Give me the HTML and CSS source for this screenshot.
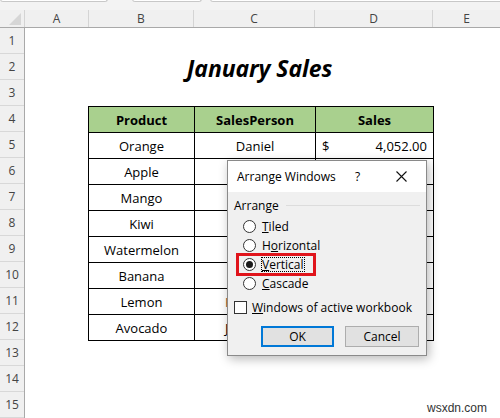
FILE: index.html
```html
<!DOCTYPE html>
<html>
<head>
<meta charset="utf-8">
<link rel="stylesheet" href="styles.css">
</head>
<body>
<div class="app">
  <div class="topbar">
    <span class="tb tb1"></span><span class="tb tb2"></span><span class="tb tb3"></span>
  </div>
  <div class="colheads">
    <div class="corner"><svg width="12" height="12" viewBox="0 0 12 12"><polygon points="12,0 12,12 0,12" fill="#d6d6d6"/></svg></div>
    <div class="ch">A</div>
    <div class="ch">B</div>
    <div class="ch">C</div>
    <div class="ch">D</div>
    <div class="ch last">E</div>
  </div>
  <div class="sheet">
    <div class="rowheads">
      <div class="rh">1</div><div class="rh">2</div><div class="rh">3</div><div class="rh">4</div><div class="rh">5</div>
      <div class="rh">6</div><div class="rh">7</div><div class="rh">8</div><div class="rh">9</div><div class="rh">10</div>
      <div class="rh">11</div><div class="rh">12</div><div class="rh">13</div><div class="rh">14</div><div class="rh">15</div>
    </div>
    <div class="cells">
      <div class="row"></div>
      <div class="row title-row"><h1 class="title">January Sales</h1></div>
      <div class="row"></div>
      <table class="sales">
        <thead>
          <tr><th class="c-b">Product</th><th class="c-c">SalesPerson</th><th class="c-d">Sales</th></tr>
        </thead>
        <tbody>
          <tr><td>Orange</td><td>Daniel</td><td class="money"><span>$</span><span>4,052.00</span></td></tr>
          <tr><td>Apple</td><td></td><td></td></tr>
          <tr><td>Mango</td><td></td><td></td></tr>
          <tr><td>Kiwi</td><td></td><td></td></tr>
          <tr><td>Watermelon</td><td></td><td></td></tr>
          <tr><td>Banana</td><td></td><td></td></tr>
          <tr><td>Lemon</td><td class="brown">K</td><td></td></tr>
          <tr><td>Avocado</td><td class="hidden-name">J</td><td></td></tr>
        </tbody>
      </table>
    </div>
  </div>

  <div class="dialog">
    <div class="dlg-title">
      <span class="dlg-name">Arrange Windows</span>
      <span class="dlg-help">?</span>
      <span class="dlg-close"><svg width="11" height="11" viewBox="0 0 11 11"><path d="M0.5 0.5 L10.5 10.5 M10.5 0.5 L0.5 10.5" stroke="#111" stroke-width="1.1" fill="none"/></svg></span>
    </div>
    <div class="dlg-body">
      <div class="group-label"><span>Arrange</span><span class="group-line"></span></div>
      <div class="options">
        <label class="opt"><span class="radio"></span><span><u>T</u>iled</span></label>
        <label class="opt"><span class="radio"></span><span>H<u>o</u>rizontal</span></label>
        <label class="opt"><span class="radio checked"></span><span class="focus"><u>V</u>ertical</span></label>
        <label class="opt"><span class="radio"></span><span><u>C</u>ascade</span></label>
      </div>
      <label class="check"><span class="box"></span><span><u>W</u>indows of active workbook</span></label>
      <div class="buttons">
        <span class="btn btn-ok">OK</span>
        <span class="btn">Cancel</span>
      </div>
    </div>
  </div>
  <div class="highlight"></div>
  <div class="watermark">wsxdn.com</div>
</div>
</body>
</html>
```

FILE: styles.css
```css
* { box-sizing: border-box; }
html, body { margin: 0; padding: 0; background: #fff; }
body { width: 500px; height: 418px; overflow: hidden; font-family: "Open Sans", "Noto Sans", sans-serif; }

.app { position: relative; width: 500px; height: 418px; overflow: hidden; }

.topbar { height: 10px; background: #f3f3f3; display: flex; align-items: flex-start; }
.tb { display: block; height: 3px; margin-top: -1px; background: #fff; border: 1px solid #c8c8c8; border-top: none; border-radius: 0 0 3px 3px; }
.tb1 { width: 108px; }
.tb2 { width: 70px; margin-left: 24px; }
.tb3 { flex: 1; margin-left: 8px; margin-right: -4px; }

.colheads { display: grid; grid-template-columns: 25px 64px 105px 121px 118px 1fr; height: 18px; background: #f0f0f0; border-bottom: 1px solid #a9a9a9; }
.corner { display: flex; align-items: flex-end; justify-content: flex-end; padding: 0 3px 2px 0; border-right: 1px solid #d4d4d4; }
.ch { border-right: 1px solid #d4d4d4; text-align: center; font-size: 12px; line-height: 17px; color: #444; }
.ch.last { border-right: none; }

.sheet { display: flex; }
.rowheads { width: 25px; background: #f0f0f0; border-right: 1px solid #a9a9a9; }
.rh { height: 26px; border-bottom: 1px solid #d8d8d8; text-align: center; font-size: 12px; line-height: 26px; color: #444; }

.cells { padding-left: 63px; }
.row { height: 26px; }
.title-row { display: flex; justify-content: center; width: 343px; }
.title { margin: 0; font-size: 23px; font-weight: 700; font-style: italic; line-height: 28px; letter-spacing: -0.1px; color: #000; }

.sales { border-collapse: collapse; font-size: 13px; color: #000; }
.sales th, .sales td { border: 1px solid #000; height: 26px; padding: 0 6px; text-align: center; white-space: nowrap; line-height: 24px; }
.sales th { background: #a9d08e; font-weight: 700; }
.c-b { width: 106px; }
.c-c { width: 121px; }
.c-d { width: 118px; }
.money span:first-child { float: left; }
.money span:last-child { float: right; }
.sales td.brown, .sales td.hidden-name { text-align: left; padding-left: 30px; }
.brown { color: #8a5a2b; }

.dialog { position: absolute; left: 227px; top: 160px; width: 200px; height: 196px; background: #f0f0f0; border: 1px solid #8a8a8a; box-shadow: 2px 3px 10px rgba(0,0,0,0.28); font-size: 12px; color: #000; display: flex; flex-direction: column; }
.dlg-title { height: 31px; background: #fff; display: flex; align-items: center; padding-left: 9px; }
.dlg-name { flex: 1; }
.dlg-help { width: 12px; margin-right: 29px; }
.dlg-close { width: 11px; height: 11px; margin-right: 19px; display: flex; }
.dlg-body { padding: 5px 6px 0 6px; display: flex; flex-direction: column; }
.group-label { display: flex; align-items: center; height: 17px; }
.group-line { flex: 1; height: 1px; background: #dcdcdc; margin-left: 7px; margin-right: 0; }
.options { display: flex; flex-direction: column; margin-top: 3px; padding-left: 9px; }
.opt { display: flex; align-items: center; height: 19px; }
.radio { width: 13px; height: 13px; border: 1px solid #333; border-radius: 50%; background: #fff; margin-right: 6px; display: flex; align-items: center; justify-content: center; }
.radio.checked::after { content: ""; width: 7px; height: 7px; border-radius: 50%; background: #1a1a1a; }
.focus { outline: 1px dotted #000; outline-offset: 0; line-height: 13px; }
.check { display: flex; align-items: center; height: 14px; margin-top: 7px; }
.box { width: 13px; height: 13px; border: 1px solid #333; background: #fff; margin-right: 5px; }
.buttons { display: flex; margin-top: 12px; padding-left: 27px; gap: 11px; }
.btn { width: 74px; height: 21px; border: 1px solid #adadad; background: #e1e1e1; display: flex; align-items: center; justify-content: center; }
.btn-ok { width: 73px; border: 2px solid #0078d7; }

.highlight { position: absolute; left: 236px; top: 253px; width: 80px; height: 23px; border: 3px solid #e0141b; }
.watermark { position: absolute; left: 427px; top: 401px; font-size: 12px; color: #333; font-family: "Liberation Sans", Arial, sans-serif; }
```
